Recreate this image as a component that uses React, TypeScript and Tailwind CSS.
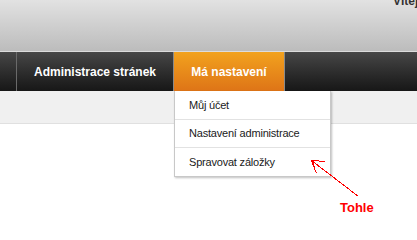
import React from "react";

const menuItems = ["Můj účet", "Nastavení administrace", "Spravovat záložky"];

export default function App() {
    return (
        <div className="relative w-[417px] h-[230px] overflow-hidden bg-white font-['Liberation_Sans',Arial,sans-serif]">
            {/* Header */}
            <div className="h-[52px] overflow-hidden bg-gradient-to-b from-[#e2e2e2] to-[#bcbcbc] border-b border-[#dcdcdc] flex pl-[393px]">
                <span className="-mt-[5px] whitespace-nowrap text-[12px] leading-[12px] font-bold text-[#333]">
                    Vítejte
                </span>
            </div>
            {/* Main nav */}
            <div className="h-[39px] flex bg-gradient-to-b from-[#474747] to-[#171717]">
                <div className="w-[17px] shrink-0 border-r border-[#6a6a6a]" />
                <div className="w-[156px] shrink-0 flex items-center justify-center text-white font-bold text-[12px]">
                    Administrace stránek
                </div>
                <div className="w-[112px] shrink-0 flex items-center justify-center border-x border-[#8a8a8a] bg-gradient-to-b from-[#f2a21e] to-[#de7417] text-white font-bold text-[12px]">
                    Má nastavení
                </div>
                <div className="flex-1" />
            </div>
            {/* Sub bar */}
            <div className="h-[33px] bg-[#f0f0f0] border-b border-[#e0e0e0]" />

            {/* Dropdown */}
            <div className="absolute left-[174px] top-[91px] w-[157px] bg-white border-x border-b border-[#c8c8c8] pt-[1px] shadow-[1px_1px_2px_rgba(0,0,0,0.25)]">
                {menuItems.map((item, i) => (
                    <div
                        key={item}
                        className={`h-[28px] flex items-center pl-[14px] text-[11px] tracking-[-0.2px] text-[#1a1a1a] ${
                            i < menuItems.length - 1 ? "border-b border-[#e2e2e2]" : "h-[27px]"
                        }`}
                    >
                        {item}
                    </div>
                ))}
            </div>

            {/* Annotation arrow */}
            <svg
                className="absolute inset-0 pointer-events-none"
                width="417"
                height="230"
                viewBox="0 0 417 230"
                shapeRendering="crispEdges"
            >
                <g stroke="#ff0000" strokeWidth="1" fill="none">
                    <line x1="358.5" y1="196.5" x2="311.5" y2="160.5" />
                    <line x1="311.5" y1="160.5" x2="325.5" y2="161.5" />
                    <line x1="311.5" y1="160.5" x2="316.5" y2="173.5" />
                    <line x1="312.5" y1="160.5" x2="314.5" y2="168.5" />
                </g>
            </svg>
            <span className="absolute left-[340px] top-[201px] text-[13px] leading-[14px] font-bold text-[#ff0000]">
                Tohle
            </span>
        </div>
    );
}
